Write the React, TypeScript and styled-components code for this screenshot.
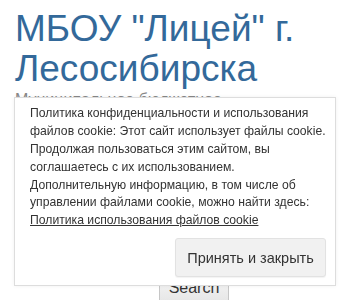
import React from "react";
import styled, { createGlobalStyle } from "styled-components";

const GlobalStyle = createGlobalStyle`
  html, body {
    margin: 0;
    padding: 0;
    background: #ffffff;
    font-family: "Liberation Sans", Arial, sans-serif;
    overflow: hidden;
  }
`;

const Page = styled.div`
  padding: 9px 15px 0;
  height: 300px;
  box-sizing: border-box;
`;

const SiteTitle = styled.h1`
  margin: 0;
  font-size: 37px;
  line-height: 40px;
  font-weight: normal;
  color: #33699a;
`;

const SiteDescription = styled.p`
  margin: 0;
  font-size: 16px;
  line-height: 22px;
  color: #888888;
`;

const SearchForm = styled.form`
  display: flex;
  margin-top: 140px;
  padding-left: 144px;
`;

const SearchButton = styled.button`
  width: 70px;
  height: 30px;
  font-family: "Liberation Sans", Arial, sans-serif;
  font-size: 16px;
  color: #333333;
  background: linear-gradient(#f7f7f7, #e6e6e6);
  border: 1px solid #c6c6c6;
  border-radius: 2px;
`;

const CookieBanner = styled.div`
  position: fixed;
  left: 14px;
  right: 14px;
  bottom: 14px;
  background: #ffffff;
  border: 1px solid #dddddd;
  box-shadow: 0 0 4px rgba(0, 0, 0, 0.06);
  padding: 7px 9px 8px 15px;
  display: flex;
  flex-direction: column;
`;

const CookieText = styled.div`
  font-size: 12.2px;
  line-height: 17.8px;
  color: #333333;
`;

const Line = styled.span`
  display: block;
  white-space: nowrap;
`;

const CookieLink = styled.a`
  color: #333333;
  text-decoration: underline;
`;

const AcceptButton = styled.button`
  align-self: flex-end;
  margin-top: 8px;
  height: 39px;
  width: 151px;
  padding: 0;
  font-family: "Liberation Sans", Arial, sans-serif;
  font-size: 14.5px;
  color: #333333;
  background: #f1f1f1;
  border: 1px solid #e2e2e2;
  border-radius: 3px;
  box-shadow: 0 1px 1px rgba(0, 0, 0, 0.05);
`;

const lines = [
  "Политика конфиденциальности и использования",
  "файлов cookie: Этот сайт использует файлы cookie.",
  "Продолжая пользоваться этим сайтом, вы",
  "соглашаетесь с их использованием.",
  "Дополнительную информацию, в том числе об",
  "управлении файлами cookie, можно найти здесь:",
];

export default function App() {
  return (
    <>
      <GlobalStyle />
      <Page>
        <SiteTitle>МБОУ "Лицей" г. Лесосибирска</SiteTitle>
        <SiteDescription>
          Муниципальное бюджетное общеобразовательное учреждение
        </SiteDescription>
        <SearchForm onSubmit={(e) => e.preventDefault()}>
          <SearchButton type="submit">Search</SearchButton>
        </SearchForm>
      </Page>
      <CookieBanner>
        <CookieText>
          {lines.map((l) => (
            <Line key={l}>{l}</Line>
          ))}
          <Line>
            <CookieLink href="#">Политика использования файлов cookie</CookieLink>
          </Line>
        </CookieText>
        <AcceptButton type="button">Принять и закрыть</AcceptButton>
      </CookieBanner>
    </>
  );
}
